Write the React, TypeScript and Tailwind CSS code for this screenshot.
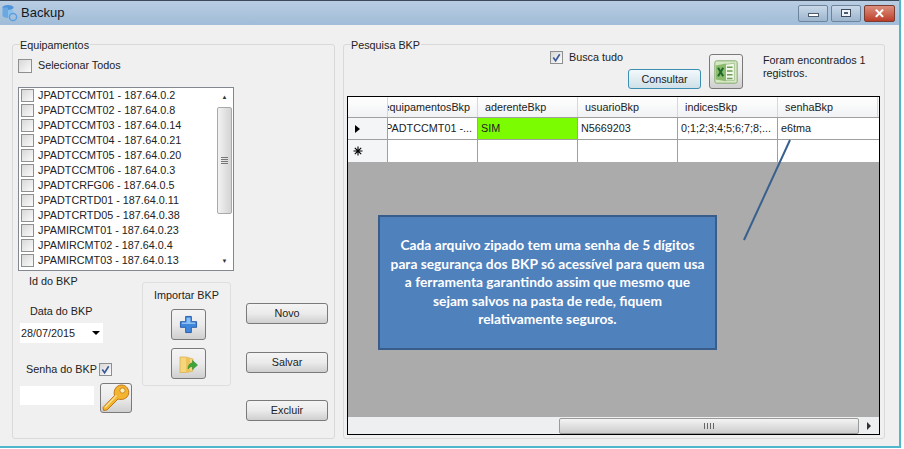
const EQUIPS = [
  "JPADTCCMT01 - 187.64.0.2",
  "JPADTCCMT02 - 187.64.0.8",
  "JPADTCCMT03 - 187.64.0.14",
  "JPADTCCMT04 - 187.64.0.21",
  "JPADTCCMT05 - 187.64.0.20",
  "JPADTCCMT06 - 187.64.0.3",
  "JPADTCRFG06 - 187.64.0.5",
  "JPADTCRTD01 - 187.64.0.11",
  "JPADTCRTD05 - 187.64.0.38",
  "JPAMIRCMT01 - 187.64.0.23",
  "JPAMIRCMT02 - 187.64.0.4",
  "JPAMIRCMT03 - 187.64.0.13",
];

const COLS = [
  { label: "equipamentosBkp", width: "w-[90px]" },
  { label: "aderenteBkp", width: "w-[100px]" },
  { label: "usuarioBkp", width: "w-[100px]" },
  { label: "indicesBkp", width: "w-[100px]" },
  { label: "senhaBkp", width: "w-[100px]" },
];

function Check({ checked = false, size = "w-[13px] h-[13px]" }: { checked?: boolean; size?: string }) {
  return (
    <span
      className={`${size} shrink-0 border border-[#8e8f8f] bg-gradient-to-br from-[#d8d8d8] to-[#fbfbfb] flex items-center justify-center`}
    >
      {checked && (
        <svg viewBox="0 0 12 12" className="w-[11px] h-[11px]">
          <path d="M2.5 6 L5 9.5 L9.5 2.5" fill="none" stroke="#3c5a9a" strokeWidth="1.8" />
        </svg>
      )}
    </span>
  );
}

function FormButton({ label, className = "" }: { label: string; className?: string }) {
  return (
    <div
      className={`w-[82px] h-[21px] rounded-[3px] border border-[#7a7a7a] bg-gradient-to-b from-[#f4f4f4] via-[#ebebeb] to-[#cfcfcf] flex items-center justify-center ${className}`}
    >
      {label}
    </div>
  );
}

function IconButton({ children, className = "" }: { children: React.ReactNode; className?: string }) {
  return (
    <div
      className={`rounded-[3px] border border-[#7a7a7a] bg-gradient-to-b from-[#f4f4f4] via-[#ebebeb] to-[#cfcfcf] flex items-center justify-center ${className}`}
    >
      {children}
    </div>
  );
}

function PlusIcon() {
  return (
    <svg viewBox="0 0 20 20" className="w-[19px] h-[19px]">
      <path
        d="M7 1.5h6v5.5h5.5v6H13v5.5H7V13H1.5V7H7z"
        fill="#3f87dc"
        stroke="#2a5ca8"
        strokeWidth="1"
      />
      <path d="M8 3h4v5H8z M3 8h14v1.5H3z" fill="#8fc0f2" />
    </svg>
  );
}

function FolderIcon() {
  return (
    <svg viewBox="0 0 20 20" className="w-[20px] h-[20px]">
      <path d="M2 3h6l7 2v12l-7 1.5H2z" fill="#f6d67c" stroke="#d4ac4e" strokeWidth="0.7" />
      <path d="M8 3l4 2v13l-4 .5z" fill="#eec25a" />
      <path d="M10 15c0-4 2-6 4.5-6V6.5L19.5 11 14.5 15.5V12.5c-2 0-3.5 1-4.5 2.5z" fill="#3da63a" stroke="#2b7d2a" strokeWidth="0.5" />
    </svg>
  );
}

function KeyIcon() {
  return (
    <svg viewBox="0 0 30 30" className="w-[30px] h-[30px]">
      <path
        d="M2 24.5L13.5 12.5C12 7 15.5 2 20.5 2c5 0 8 4.5 7 9-1 4.5-6.5 6.5-10.500 5L6 27l-3.500.500z"
        fill="#f3b52e"
        stroke="#c2761a"
        strokeWidth="1"
      />
      <circle cx="21.500" cy="7.500" r="2.600" fill="#fdeeb4" stroke="#c2761a" strokeWidth="0.8" />
      <path d="M4 24.500L15.500 12.500" stroke="#fde29a" strokeWidth="1.300" />
    </svg>
  );
}

function ExcelIcon() {
  return (
    <svg viewBox="0 0 30 30" className="w-[28px] h-[28px]">
      <rect x="3" y="3" width="24" height="24" rx="2" fill="#d5e8c4" stroke="#7fa86c" />
      <path d="M14 7l10-1.5V24H14z" fill="#f2f8ea" stroke="#8fb47a" strokeWidth="0.7" />
      <path d="M16 10h6M16 14h6M16 18h6M16 22h6" stroke="#6e9c58" strokeWidth="1.6" />
      <path d="M4 8l11-2v19L4 23z" fill="#8cbb6e" />
      <path d="M6.500 10.500l5.500 9M12 10.500l-5.500 9" stroke="#1e6a2a" strokeWidth="2.200" />
    </svg>
  );
}

function AppIcon() {
  return (
    <svg viewBox="0 0 16 18" className="w-[16px] h-[18px]">
      <ellipse cx="6" cy="3.500" rx="5.500" ry="2.500" fill="#4f94d8" />
      <path d="M.5 3.500v8c0 1.400 2.500 2.500 5.500 2.500V3.500z" fill="#6aa8e2" />
      <path d="M6 6h5v2l-5 6z" fill="#8cc0ec" />
      <circle cx="11" cy="13" r="3.600" fill="none" stroke="#5aa0e0" strokeWidth="1.500" />
    </svg>
  );
}

function TitleBar() {
  return (
    <header className="h-[25px] border-t border-t-[#3c4a5c] bg-gradient-to-b from-[#b9cde2] to-[#a0bcd8] flex items-center">
      <span className="ml-[2px] mr-[3px]">
        <AppIcon />
      </span>
      <span className="text-[13px] text-[#10181f]">Backup</span>
      <div className="ml-auto mr-[4px] flex gap-[3px] h-[17px]">
        <div className="w-[30px] h-[17px] rounded-[2px] border border-[#6d849c] bg-gradient-to-b from-[#c9d9e9] to-[#9db5cd] flex items-center justify-center">
          <span className="w-[11px] h-[4px] mt-[4px] border border-[#4c5c6c] bg-white" />
        </div>
        <div className="w-[30px] h-[17px] rounded-[2px] border border-[#6d849c] bg-gradient-to-b from-[#c9d9e9] to-[#9db5cd] flex items-center justify-center">
          <span className="w-[10px] h-[8px] border border-[#3c4c5c] bg-white/80 flex items-center justify-center">
            <span className="w-[4px] h-[2px] bg-[#4c5c6c]" />
          </span>
        </div>
        <div className="w-[31px] h-[17px] rounded-[2px] border border-[#7b3c30] bg-gradient-to-b from-[#dc8f7e] to-[#bb3c28] flex items-center justify-center text-white text-[13px] font-bold leading-none">
          ✕
        </div>
      </div>
    </header>
  );
}

function EquipList() {
  return (
    <div className="w-[216px] h-[184px] mt-[14px] bg-white border border-[#828790] flex">
      <div className="flex-1 pl-[2px]">
        {EQUIPS.map((e) => (
          <div key={e} className="h-[15px] flex items-center gap-[4px] whitespace-nowrap">
            <Check />
            <span>{e}</span>
          </div>
        ))}
      </div>
      <div className="w-[17px] flex flex-col items-center">
        <span className="mt-[6px] text-[#333] text-[6px] h-[8px] leading-none">▲</span>
        <div className="mt-[5px] w-[15px] h-[107px] rounded-[2px] border border-[#a9a9a9] bg-gradient-to-r from-[#f2f2f2] to-[#d4d4d4] flex flex-col items-center justify-center gap-[1px]">
          <span className="w-[7px] h-[1px] bg-[#777]" />
          <span className="w-[7px] h-[1px] bg-[#777]" />
          <span className="w-[7px] h-[1px] bg-[#777]" />
          <span className="w-[7px] h-[1px] bg-[#777]" />
        </div>
        <span className="mt-auto mb-[6px] text-[#333] text-[6px] leading-none">▼</span>
      </div>
    </div>
  );
}

function LeftGroup() {
  return (
    <section className="relative w-[323px] h-[395px] border border-[#d9d9d9] rounded-[3px] flex px-[5px]">
      <span className="absolute left-[7px] -top-[7px] bg-[#f0f0f0] pr-[1px] leading-[14px]">Equipamentos</span>
      <div className="w-[226px]">
        <label className="mt-[13px] h-[15px] flex items-center gap-[6px]">
          <Check size="w-[14px] h-[14px]" />
          <span>Selecionar Todos</span>
        </label>
        <EquipList />
        <div className="flex">
          <div className="w-[124px]">
            <p className="ml-[11px] mt-[3px] leading-[14px]">Id do BKP</p>
            <p className="ml-[12px] mt-[16px] leading-[14px]">Data do BKP</p>
            <div className="mt-[5px] ml-[2px] w-[83px] h-[20px] bg-white flex items-center pl-[1px]">
              <span>28/07/2015</span>
              <span className="ml-auto mr-[3px] w-0 h-0 border-x-[4px] border-t-[4px] border-x-transparent border-t-black" />
            </div>
            <div className="ml-[8px] mt-[19px] h-[15px] flex items-center gap-[2px]">
              <span className="whitespace-nowrap">Senha do BKP</span>
              <Check checked />
            </div>
            <div className="flex mt-[6px] ml-[2px] items-start">
              <div className="w-[74px] h-[19px] mt-[3px] bg-white" />
              <IconButton className="w-[32px] h-[30px] ml-[6px]">
                <KeyIcon />
              </IconButton>
            </div>
          </div>
          <div className="w-[89px] h-[104px] mt-[11px] border border-[#dedede] rounded-[3px] flex flex-col items-center">
            <span className="mt-[5px] leading-[14px]">Importar BKP</span>
            <IconButton className="w-[35px] h-[31px] mt-[7px] ml-[3px]">
              <PlusIcon />
            </IconButton>
            <IconButton className="w-[35px] h-[31px] mt-[8px] ml-[3px]">
              <FolderIcon />
            </IconButton>
          </div>
        </div>
      </div>
      <div className="ml-[2px] pt-[258px] flex flex-col">
        <FormButton label="Novo" />
        <FormButton label="Salvar" className="mt-[28px]" />
        <FormButton label="Excluir" className="mt-[27px]" />
      </div>
    </section>
  );
}

function DataGrid() {
  return (
    <div className="relative mx-[3px] mt-[3px] w-[533px] h-[339px] border border-black bg-[#ababab] flex flex-col">
      <div className="flex h-[21px] bg-gradient-to-b from-white to-[#f1f2f4] border-b border-[#a0a0a0]">
        <div className="w-[40px] border-r border-[#d8d8d8]" />
        {COLS.map((c, i) => (
          <div
            key={c.label}
            className={`${c.width} border-r border-[#d8d8d8] flex items-center overflow-hidden whitespace-nowrap ${i === 0 ? "pl-0 justify-end pr-[7px]" : "pl-[7px]"}`}
          >
            {c.label}
          </div>
        ))}
      </div>
      <div className="flex h-[22px] bg-white border-b border-[#a0a0a0]">
        <div className="w-[40px] border-r border-[#a0a0a0] bg-[#f4f5f7] flex items-center pl-[7px]">
          <span className="w-0 h-0 border-y-[4px] border-l-[5px] border-y-transparent border-l-black" />
        </div>
        <div className="w-[90px] border-r border-[#a0a0a0] flex items-center justify-end pr-[5px] overflow-hidden whitespace-nowrap">
          JPADTCCMT01 -...
        </div>
        <div className="w-[100px] border-r border-[#a0a0a0] bg-[#7cfc00] flex items-center pl-[3px]">SIM</div>
        <div className="w-[100px] border-r border-[#a0a0a0] flex items-center pl-[3px]">N5669203</div>
        <div className="w-[100px] border-r border-[#a0a0a0] flex items-center pl-[3px]">0;1;2;3;4;5;6;7;8;...</div>
        <div className="w-[100px] flex items-center pl-[3px]">e6tma</div>
      </div>
      <div className="flex h-[22px] bg-white">
        <div className="w-[40px] border-r border-[#a0a0a0] bg-[#f4f5f7] flex items-center pl-[5px]">
          <svg viewBox="0 0 10 10" className="w-[10px] h-[10px]">
            <path d="M5 0.500v9M0.500 5h9M1.800 1.800l6.400 6.400M8.200 1.800l-6.400 6.400" stroke="#000" strokeWidth="1.100" />
          </svg>
        </div>
        <div className="w-[90px] border-r border-[#a0a0a0]" />
        <div className="w-[100px] border-r border-[#a0a0a0]" />
        <div className="w-[100px] border-r border-[#a0a0a0]" />
        <div className="w-[100px] border-r border-[#a0a0a0]" />
      </div>
      <div className="mt-auto h-[17px] bg-[#eeeff1] flex items-center pl-[211px]">
        <div className="w-[300px] h-[16px] rounded-[2px] border border-[#9a9a9a] bg-gradient-to-b from-[#f4f4f4] to-[#cdcdcd] flex items-center justify-center gap-[1px]">
          <span className="w-[1px] h-[6px] bg-[#666]" />
          <span className="w-[1px] h-[6px] bg-[#666] ml-[1px]" />
          <span className="w-[1px] h-[6px] bg-[#666] ml-[1px]" />
          <span className="w-[1px] h-[6px] bg-[#666] ml-[1px]" />
        </div>
        <span className="ml-[8px] w-0 h-0 border-y-[4px] border-l-[4px] border-y-transparent border-l-[#333]" />
      </div>
    </div>
  );
}

function RightGroup() {
  return (
    <section className="relative w-[542px] h-[395px] border border-[#d9d9d9] rounded-[3px]">
      <span className="absolute left-[7px] -top-[7px] bg-[#f0f0f0] pr-[1px] leading-[14px]">Pesquisa BKP</span>
      <div className="h-[48px] flex">
        <div className="ml-[206px] w-[78px] pt-[5px]">
          <label className="flex items-center gap-[6px] h-[14px] whitespace-nowrap">
            <Check checked />
            <span>Busca tudo</span>
          </label>
        </div>
        <div className="pt-[24px]">
          <div className="w-[73px] h-[20px] rounded-[3px] border border-[#3c8fb0] bg-gradient-to-b from-[#f2f9fc] to-[#cfe0e8] flex items-center justify-center">
            Consultar
          </div>
        </div>
        <IconButton className="ml-[8px] mt-[9px] w-[34px] h-[35px]">
          <ExcelIcon />
        </IconButton>
        <p className="ml-[20px] mt-[9px] w-[120px] leading-[13px]">Foram encontrados 1 registros.</p>
      </div>
      <DataGrid />
    </section>
  );
}

export default function App() {
  return (
    <div className="relative w-[904px] h-[449px] bg-white overflow-hidden font-['Liberation_Sans',sans-serif] text-[10.8px] text-[#222]">
      <div className="w-[901px] h-[448px] bg-[#f0f0f0] border-b-2 border-r-2 border-[#4fb6cc] flex flex-col">
        <TitleBar />
        <main className="flex gap-[8px] pl-[12px] pt-[19px]">
          <LeftGroup />
          <RightGroup />
        </main>
      </div>

      {/* callout drawn over the grid */}
      <svg className="absolute left-0 top-0 w-[904px] h-[449px] pointer-events-none" viewBox="0 0 904 449">
        <line x1="790" y1="140" x2="744" y2="240" stroke="#38608f" strokeWidth="2" />
      </svg>
      <div className="absolute left-[378px] top-[215px] w-[339px] h-[135px] bg-[#4f81bd] border-2 border-[#385d8a] flex items-center justify-center text-center text-white font-['Lato',sans-serif] font-bold text-[13.75px] leading-[18.5px]">
        <p>
          Cada arquivo zipado tem uma senha de 5 dígitos
          <br />
          para segurança dos BKP só acessível para quem usa
          <br />a ferramenta garantindo assim que mesmo que
          <br />
          sejam salvos na pasta de rede, fiquem
          <br />
          relativamente seguros.
        </p>
      </div>
    </div>
  );
}
